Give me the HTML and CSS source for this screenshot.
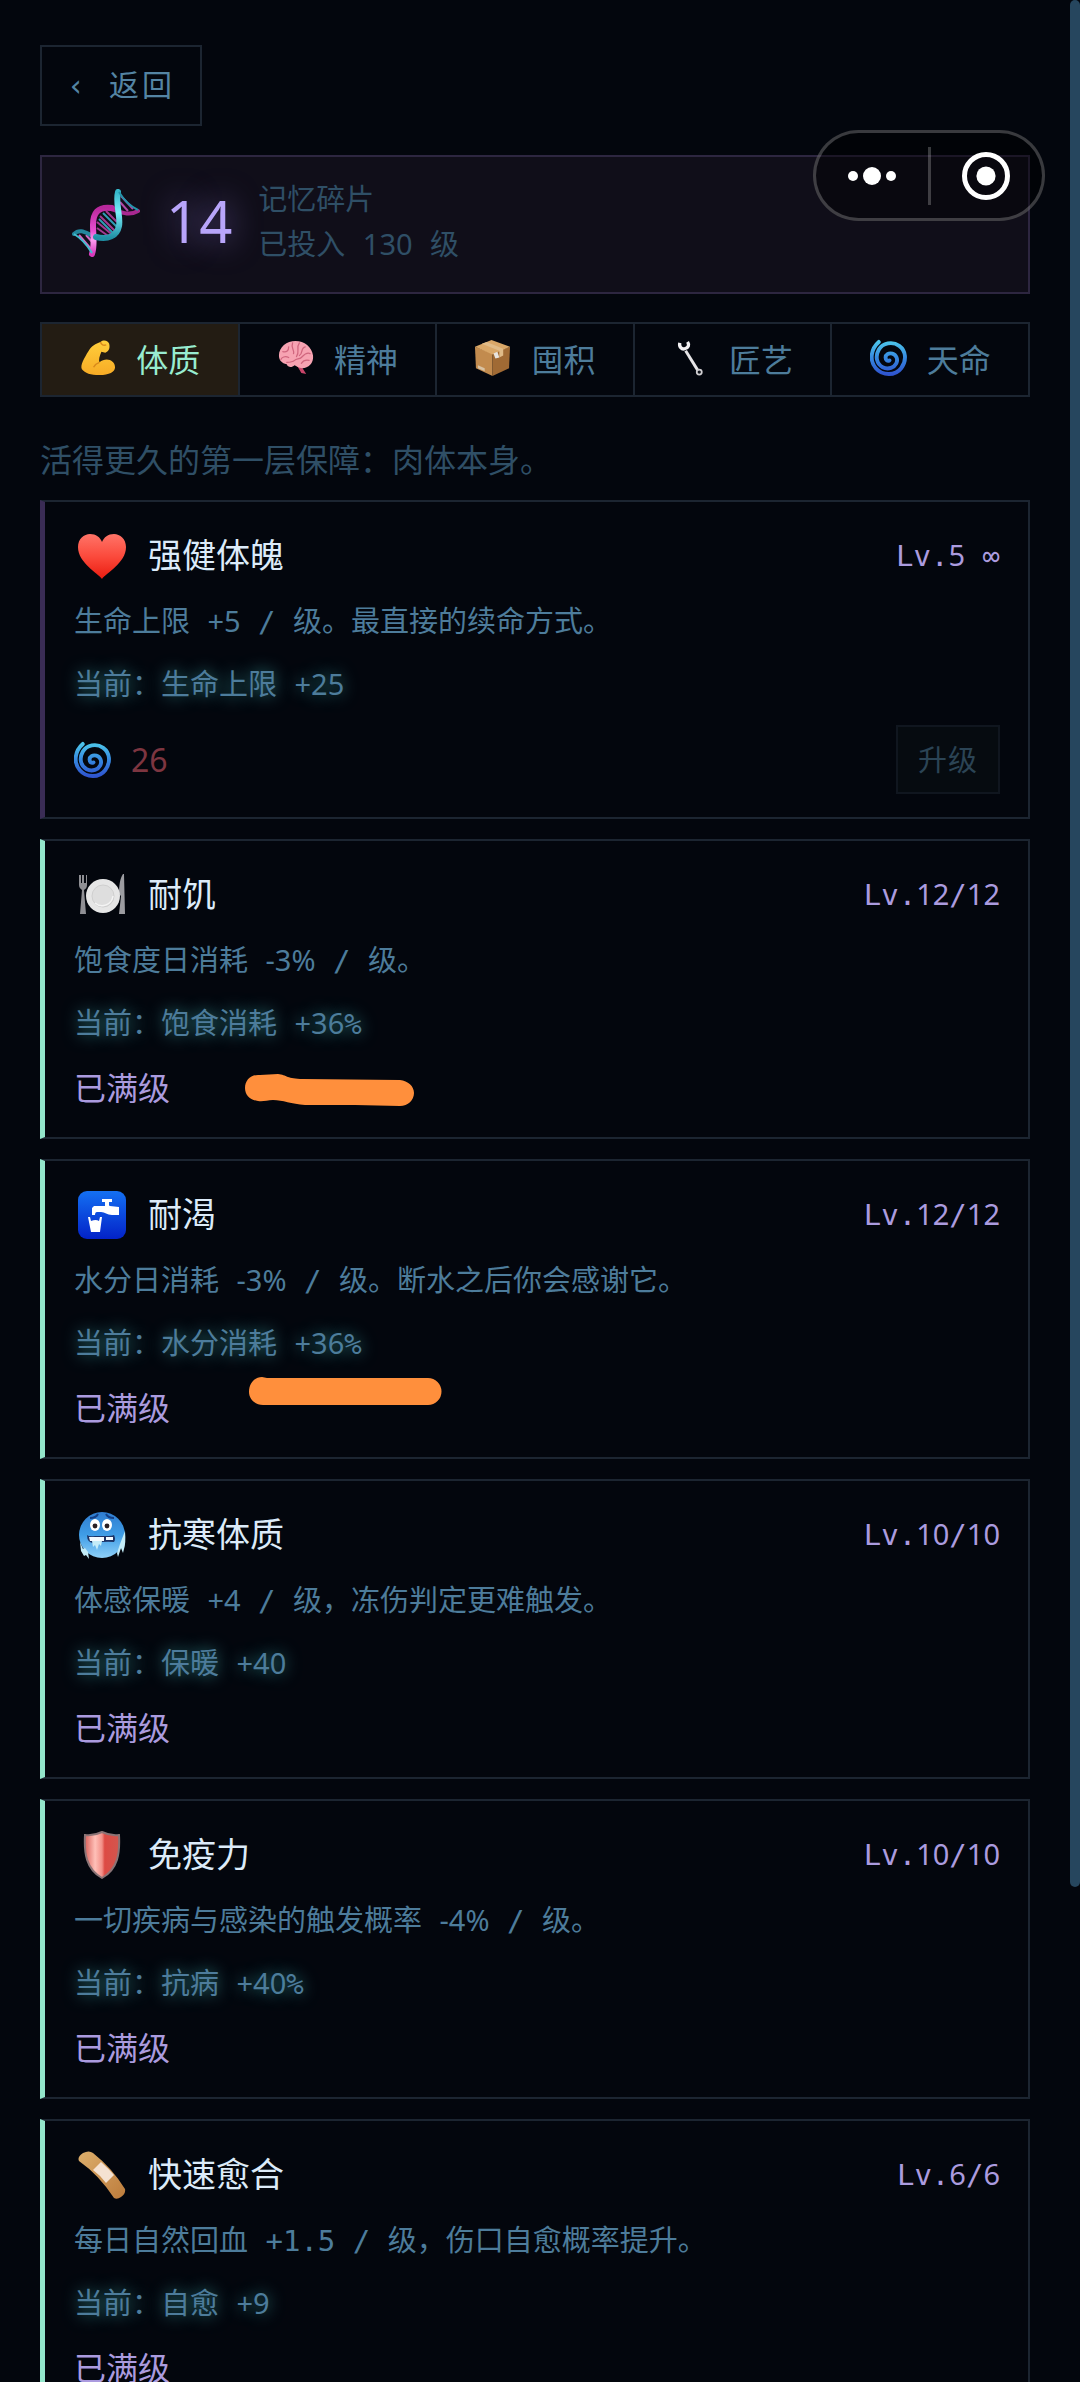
FILE: index.html
```html
<!DOCTYPE html>
<html lang="zh-CN">

<head>
    <meta charset="UTF-8">
    <meta name="viewport" content="width=device-width, initial-scale=1.0">
    <title>记忆碎片</title>
    <link rel="stylesheet" href="styles.css">
</head>

<body>
    <!-- shared gradients and the cyclone icon -->
    <svg class="defs" width="0" height="0" aria-hidden="true">
        <defs>
            <linearGradient id="gSwirl" x1="0" y1="0" x2="0" y2="1">
                <stop offset="0" stop-color="#4cc4ea" />
                <stop offset="0.5" stop-color="#3588e0" />
                <stop offset="1" stop-color="#2f55cf" />
            </linearGradient>
            <linearGradient id="gHeart" x1="0" y1="0" x2="0" y2="1">
                <stop offset="0" stop-color="#ff7468" />
                <stop offset="0.5" stop-color="#fb4a3c" />
                <stop offset="1" stop-color="#ea1c10" />
            </linearGradient>
            <linearGradient id="gTap" x1="0" y1="0" x2="0" y2="1">
                <stop offset="0" stop-color="#1470f2" />
                <stop offset="1" stop-color="#0322c8" />
            </linearGradient>
            <linearGradient id="gCold" x1="0" y1="0" x2="0" y2="1">
                <stop offset="0" stop-color="#2f7cd0" />
                <stop offset="0.5" stop-color="#3f9de6" />
                <stop offset="1" stop-color="#8fd0f8" />
            </linearGradient>
            <linearGradient id="gShield" x1="0" y1="0" x2="1" y2="0">
                <stop offset="0" stop-color="#d9605a" />
                <stop offset="0.3" stop-color="#ffc0b8" />
                <stop offset="0.5" stop-color="#f29088" />
                <stop offset="0.58" stop-color="#dd4a44" />
                <stop offset="1" stop-color="#d2564e" />
            </linearGradient>
            <linearGradient id="gAid" x1="0" y1="0" x2="1" y2="1">
                <stop offset="0" stop-color="#dcae6c" />
                <stop offset="1" stop-color="#bd7c3c" />
            </linearGradient>
            <linearGradient id="gArm" x1="0" y1="0" x2="0" y2="1">
                <stop offset="0" stop-color="#ffcf3c" />
                <stop offset="1" stop-color="#f7ab25" />
            </linearGradient>
            <linearGradient id="gPink" x1="0" y1="0" x2="0" y2="1">
                <stop offset="0" stop-color="#b8289c" />
                <stop offset="0.5" stop-color="#ea4fd2" />
                <stop offset="0.7" stop-color="#ff9cf0" />
                <stop offset="1" stop-color="#d63abb" />
            </linearGradient>
            <linearGradient id="gCyan" x1="0" y1="0" x2="0" y2="1">
                <stop offset="0" stop-color="#35b8ca" />
                <stop offset="0.45" stop-color="#7cf0fa" />
                <stop offset="1" stop-color="#1f8fa4" />
            </linearGradient>
        </defs>
        <symbol id="swirl" viewBox="0 0 38 38">
            <path d="M9 3C1 10-1 22 6 30s20 8 26 0 5-18-2-23-17-3-21 4-2 15 4 18 12 0 14-4 0-9-4-10-7 1-7 4 2 4 4 3" fill="none" stroke="url(#gSwirl)" stroke-width="4" stroke-linecap="round" />
        </symbol>
    </svg>

    <main class="screen">
        <button class="back" type="button">‹ 返回</button>

        <section class="summary">
            <svg class="dna" viewBox="0 0 68 68">
                <g stroke-width="2">
                    <path d="M25 39l14 10M25 33l18 15M28 27l17 17M34 22l11 11" stroke="#a33a92" />
                    <path d="M27 30l17 17M31 24l14 14" stroke="#2f9db4" />
                    <path d="M49 7l12 13M48 13l8 9" stroke="#b048a8" />
                    <path d="M7 46l13 15M14 46l7 8" stroke="#d06cc4" />
                </g>
                <path d="M2 45C9 38 16 46 24 48" fill="none" stroke="#23879d" stroke-width="4" stroke-linecap="round" />
                <path d="M66 22C56 28 47 22 36 19" fill="none" stroke="#a82890" stroke-width="4" stroke-linecap="round" />
                <path d="M40 19C25 17 21 25 21 36C21 46 23 56 20 65" fill="none" stroke="url(#gPink)" stroke-width="6" stroke-linecap="round" />
                <path d="M46 3C43 14 49 28 47 37C45 47 36 51 24 48" fill="none" stroke="url(#gCyan)" stroke-width="6" stroke-linecap="round" />
                <path d="M47 3Q54 15 66 21" fill="none" stroke="#2396ac" stroke-width="2" />
                <path d="M2 45Q12 51 20 64" fill="none" stroke="#43bdd0" stroke-width="2" />
            </svg>
            <strong class="total">14</strong>
            <div class="summary-text">
                <div>记忆碎片</div>
                <div>已投入 <span class="num">130</span> 级</div>
            </div>
        </section>

        <nav class="tabs">
            <button class="tab active" type="button">
                <svg viewBox="0 0 38 38">
                    <path d="M22 3c4-3 8-1 9 2 1 4 0 8-4 9l-4-1c-2 5-3 8-2 11 7-6 16-2 16 5 0 5-6 8-16 8-9 0-15-2-18-6C1 27 5 20 10 12c3-5 7-7 12-9z" fill="url(#gArm)" />
                    <path d="M22 3c1 3 3 4 6 3M21 24c-3 1-5 3-6 5" fill="none" stroke="#d98a1c" stroke-width="1.5" />
                </svg>
                体质
            </button>
            <button class="tab" type="button">
                <svg viewBox="0 0 38 38">
                    <path d="M25 28l5 8-5-1-4-7z" fill="#c9456a" />
                    <path d="M2 17C2 8 10 2 19 2s17 6 18 15c1 8-5 13-11 13-4 0-6-2-8-3-3 3-7 2-8-1-5-1-8-4-8-9z" fill="#f7a3b2" />
                    <path d="M6 13c4 1 6-1 6-5M12 19c-4-2-7 0-8 2M16 4c-2 5 2 7 1 11M23 4c-4 5 1 9-3 14M29 8c-5 1-2 7-6 9M34 15c-4-2-7 2-9 4s-5 1-7 3-5 2-8 2M33 22c-4-1-6 0-8 3" fill="none" stroke="#d0667e" stroke-width="1.3" stroke-linecap="round" />
                </svg>
                精神
            </button>
            <button class="tab" type="button">
                <svg viewBox="0 0 38 38">
                    <path d="M1 8L19 15V38L2 30z" fill="#c28b4e" />
                    <path d="M37 8L19 15V38l17-8z" fill="#a06a34" />
                    <path d="M1 8L18 1l19 7-18 8z" fill="#d9a768" />
                    <path d="M8 5l18 7v7l4-2v-7L13 3z" fill="#e0bb88" />
                    <path d="M20 15l4-2 2 6-4 1z" fill="#e8e4de" />
                    <path d="M4 27l7 3v3l-7-3z" fill="#d8c2a2" />
                </svg>
                囤积
            </button>
            <button class="tab" type="button">
                <svg viewBox="0 0 38 38">
                    <path d="M14 12L27 33" stroke="#e6e4e6" stroke-width="3" />
                    <path d="M8 4c-1 4 2 7 5 6 4-1 5-4 3-7" fill="none" stroke="#f2f0f2" stroke-width="3.4" />
                    <circle cx="28" cy="34" r="2.6" fill="#10131a" stroke="#cfcdd0" stroke-width="1.8" />
                </svg>
                匠艺
            </button>
            <button class="tab" type="button">
                <svg><use href="#swirl" /></svg>
                天命
            </button>
        </nav>

        <p class="intro">活得更久的第一层保障：肉体本身。</p>

        <div class="cards">
            <article class="card">
                <header class="card-head">
                    <svg class="icon" viewBox="0 0 48 48">
                        <path d="M24 47C20 41 0 31 0 15 0 7 6 2 12 2c6 0 10 3 12 8 2-5 6-8 12-8 6 0 12 5 12 13 0 16-20 26-24 32z" fill="url(#gHeart)" />
                    </svg>
                    <h2>强健体魄</h2>
                    <span class="level">Lv.<span class="num">5</span> ∞</span>
                </header>
                <p>生命上限 <span class="num">+5</span> / 级。最直接的续命方式。</p>
                <p class="now">当前：生命上限 <span class="num">+25</span></p>
                <footer class="card-foot">
                    <span class="cost"><svg><use href="#swirl" /></svg><span class="num">26</span></span>
                    <button class="upgrade" type="button" disabled>升级</button>
                </footer>
            </article>

            <article class="card maxed">
                <header class="card-head">
                    <svg class="icon" viewBox="0 0 48 48">
                        <path d="M1 4v10c0 3 2 4 3 5L2 43h6L6 19c2-1 3-3 3-5V4H8v8H6V4H4v8H3V4z" fill="#8f8f94" />
                        <path d="M45 3c-3 4-4 12-4 20l2 2-2 18h6L46 3z" fill="#9c9ca1" />
                        <circle cx="25" cy="25" r="17" fill="#e6e6e6" />
                        <circle cx="25" cy="25" r="11" fill="#dedede" stroke="#cfcfcf" />
                        <path d="M17 32a11 11 0 0 0 18-7" fill="none" stroke="#f4f4f4" stroke-width="1.5" />
                    </svg>
                    <h2>耐饥</h2>
                    <span class="level">Lv.<span class="num">12</span>/<span class="num">12</span></span>
                </header>
                <p>饱食度日消耗 <span class="num">-3%</span> / 级。</p>
                <p class="now">当前：饱食消耗 <span class="num">+36</span>%</p>
                <footer class="card-foot">已满级</footer>
                <svg class="mark mark-food" viewBox="0 0 170 33">
                    <path d="M0 14C0 6 6 0 15 1L33 0C42 1 42 5 58 5L155 6C163 7 169 12 169 19S163 32 155 32L110 31H60C46 30 38 26 28 26 22 26 18 28 13 27 5 26 0 21 0 14z" fill="#ff8f3c" />
                </svg>
            </article>

            <article class="card maxed">
                <header class="card-head">
                    <svg class="icon" viewBox="0 0 48 48">
                        <rect width="48" height="48" rx="9" fill="url(#gTap)" />
                        <path d="M24 8h10v3h-3v4h-4v-4h-3z" fill="#fff" />
                        <path d="M16 15h11q2-2 5 0l9 1v8h-7c-5 0-7-3-11-3h-4q-2 0-2 3h-3v-7z" fill="#fff" />
                        <path d="M10 26h2l1 4q5-2 8 0l1-4h2l-2 15h-9z" fill="#fff" />
                    </svg>
                    <h2>耐渴</h2>
                    <span class="level">Lv.<span class="num">12</span>/<span class="num">12</span></span>
                </header>
                <p>水分日消耗 <span class="num">-3%</span> / 级。断水之后你会感谢它。</p>
                <p class="now">当前：水分消耗 <span class="num">+36</span>%</p>
                <footer class="card-foot">已满级</footer>
                <svg class="mark mark-water" viewBox="0 0 193 29">
                    <path d="M0 15C0 6 6 0 13 0L18 1H179A13.5 13.5 0 0 1 179 28H14C6 28 0 22 0 15z" fill="#ff8f3c" />
                </svg>
            </article>

            <article class="card maxed">
                <header class="card-head">
                    <svg class="icon" viewBox="0 0 48 48">
                        <circle cx="24" cy="24" r="23" fill="url(#gCold)" />
                        <path d="M12 7q6 0 8-4M28 3q2 4 8 4" stroke="#143f85" stroke-width="2" fill="none" />
                        <ellipse cx="17" cy="14" rx="5" ry="6" fill="#fff" />
                        <ellipse cx="29" cy="14" rx="5" ry="6" fill="#fff" />
                        <circle cx="17" cy="15" r="2.4" fill="#291f24" />
                        <circle cx="29" cy="15" r="2.4" fill="#291f24" />
                        <path d="M9 24q2 2 8 1h11q6 0 8-1 2 4 0 7-8-1-20 1-7 0-7-8z" fill="#1c3264" />
                        <path d="M11 26h15v4H12zM28 26h7v3h-7z" fill="#f4fbff" />
                        <path d="M14 30h10l-1 5-2-2-2 6-2-5-2 2z" fill="#c4ecf8" />
                        <path d="M2 31l3 7 2-1 3 4 1 7-3-4-2 1-3-5zM47 20q1 12-1 18l-1 4-2-5-3 9-1-4 3-9z" fill="#c4ecf8" />
                    </svg>
                    <h2>抗寒体质</h2>
                    <span class="level">Lv.<span class="num">10</span>/<span class="num">10</span></span>
                </header>
                <p>体感保暖 <span class="num">+4</span> / 级，冻伤判定更难触发。</p>
                <p class="now">当前：保暖 <span class="num">+40</span></p>
                <footer class="card-foot">已满级</footer>
            </article>

            <article class="card maxed">
                <header class="card-head">
                    <svg class="icon" viewBox="0 0 48 48">
                        <path d="M24 1Q32 5 41 4C42 22 40 38 24 47 8 38 6 22 7 4Q16 5 24 1z" fill="url(#gShield)" stroke="#8b7476" stroke-width="2" />
                    </svg>
                    <h2>免疫力</h2>
                    <span class="level">Lv.<span class="num">10</span>/<span class="num">10</span></span>
                </header>
                <p>一切疾病与感染的触发概率 <span class="num">-4%</span> / 级。</p>
                <p class="now">当前：抗病 <span class="num">+40</span>%</p>
                <footer class="card-foot">已满级</footer>
            </article>

            <article class="card maxed">
                <header class="card-head">
                    <svg class="icon" viewBox="0 0 48 48">
                        <path d="M1 10Q-1 6 5 2Q11-1 15 2Q34 17 47 38Q48 43 43 46Q39 49 36 47Q21 24 1 10z" fill="url(#gAid)" />
                        <path d="M15 19L23 11Q31 18 36 24L28 32Q22 24 15 19z" fill="#f5e2d2" />
                    </svg>
                    <h2>快速愈合</h2>
                    <span class="level">Lv.<span class="num">6</span>/<span class="num">6</span></span>
                </header>
                <p>每日自然回血 +1.5 / 级，伤口自愈概率提升。</p>
                <p class="now">当前：自愈 <span class="num">+9</span></p>
                <footer class="card-foot">已满级</footer>
            </article>
        </div>
    </main>

    <div class="capsule">
        <button type="button" aria-label="更多">
            <svg width="50" height="20" viewBox="0 0 50 20">
                <circle cx="6" cy="10" r="5" />
                <circle cx="25" cy="10" r="9" />
                <circle cx="44" cy="10" r="5" />
            </svg>
        </button>
        <span class="capsule-line"></span>
        <button type="button" aria-label="关闭">
            <svg width="50" height="50" viewBox="0 0 50 50">
                <circle cx="25" cy="25" r="21.5" fill="none" stroke="#fff" stroke-width="5" />
                <circle cx="25" cy="25" r="9.6" />
            </svg>
        </button>
    </div>
    <div class="scroll-thumb"></div>
</body>

</html>
```

FILE: styles.css
```css
* {
    box-sizing: border-box;
}

body {
    margin: 0;
    height: 100vh;
    overflow: hidden;
    background: #03060d;
    color: #4d7c9b;
    font-family: "DejaVu Sans Mono", "Noto Sans CJK SC", monospace;
    font-size: 29px;
}

button {
    margin: 0;
    font-family: inherit;
    color: inherit;
    background: none;
    border: 2px solid #1c2531;
    cursor: pointer;
}

h2,
p {
    margin: 0;
    font-weight: 400;
}

.defs {
    position: absolute;
}

.num {
    font-family: "Noto Sans", "Noto Sans CJK SC", sans-serif;
    line-height: 1;
}

.screen {
    height: 100vh;
    overflow: hidden;
    padding: 45px 50px 0 40px;
}

.back {
    display: block;
    height: 81px;
    padding: 0 25px 5px;
    font-size: 30px;
    letter-spacing: 3px;
    color: #5484a3;
}

.summary {
    display: flex;
    align-items: center;
    gap: 26px;
    height: 139px;
    margin-top: 29px;
    padding: 0 30px 4px;
    background: #100e19;
    border: 2px solid #2d2640;
}

.dna {
    width: 68px;
    height: 68px;
}

.total {
    padding-bottom: 4px;
    font-family: "Noto Sans", sans-serif;
    font-size: 58px;
    font-weight: 400;
    line-height: 64px;
    color: #b8a5fa;
    text-shadow: 0 0 32px rgba(167, 139, 250, 0.6);
}

.summary-text {
    line-height: 45px;
    color: #2f4f66;
}

.tabs {
    display: flex;
    height: 75px;
    margin-top: 28px;
    border: 2px solid #1c2531;
}

.tab {
    flex: 1;
    display: flex;
    align-items: center;
    justify-content: center;
    gap: 20px;
    padding: 0 0 4px;
    border: 0;
    border-right: 2px solid #1c2531;
    font-size: 32px;
}

.tab:last-child {
    border-right: 0;
}

.tab svg,
.cost svg {
    width: 37px;
    height: 37px;
}

.tab.active {
    background: #231c13;
    color: #98ecd0;
}

.intro {
    margin-top: 40px;
    font-size: 32px;
    line-height: 48px;
    color: #2f4f66;
}

.cards {
    display: flex;
    flex-direction: column;
    gap: 20px;
    margin-top: 15px;
}

.card {
    position: relative;
    display: flex;
    flex-direction: column;
    gap: 16px;
    padding: 23px 28px 23px 29px;
    line-height: 47px;
    border: 2px solid #1c2531;
    border-left: 5px solid #3a2c55;
}

.card.maxed {
    border-left-color: #93e6cb;
}

.card-head {
    display: flex;
    align-items: center;
    height: 58px;
    padding-top: 4px;
}

.card-head h2 {
    flex: 1;
    margin-left: 22px;
    font-size: 34px;
    color: #dcebf9;
}

.icon {
    width: 48px;
    height: 48px;
    margin-left: 4px;
}

.level {
    color: #ab9bdf;
}

.now {
    text-shadow: 0 0 16px rgba(70, 190, 190, 0.7);
}

.card-foot {
    display: flex;
    align-items: center;
    justify-content: space-between;
    font-size: 32px;
    line-height: 50px;
    color: #ab9bdf;
}

.cost {
    display: flex;
    align-items: center;
    gap: 20px;
    color: #7d3540;
}

.upgrade {
    height: 69px;
    padding: 0 20px 4px;
    font-size: 29px;
    letter-spacing: 1px;
    color: #2b4455;
    background: #060b10;
    border-color: #10161f;
}

/* highlighter strokes over the cards */
.mark {
    position: absolute;
}

.mark-food {
    left: 200px;
    top: 233px;
    width: 170px;
}

.mark-water {
    left: 204px;
    top: 216px;
    width: 193px;
}

.capsule {
    position: absolute;
    top: 130px;
    right: 35px;
    display: flex;
    align-items: center;
    width: 232px;
    height: 91px;
    background: rgba(0, 0, 0, 0.4);
    border: 3px solid rgba(255, 255, 255, 0.22);
    border-radius: 46px;
}

.capsule button {
    flex: 1;
    display: flex;
    align-items: center;
    justify-content: center;
    padding: 0;
    border: 0;
}

.capsule svg {
    fill: #fff;
}

.capsule-line {
    width: 3px;
    height: 58px;
    background: rgba(255, 255, 255, 0.22);
}

.scroll-thumb {
    position: absolute;
    top: 0;
    right: 0;
    width: 10px;
    height: 79.2vh;
    border-radius: 5px;
    background: #26465e;
}
```
